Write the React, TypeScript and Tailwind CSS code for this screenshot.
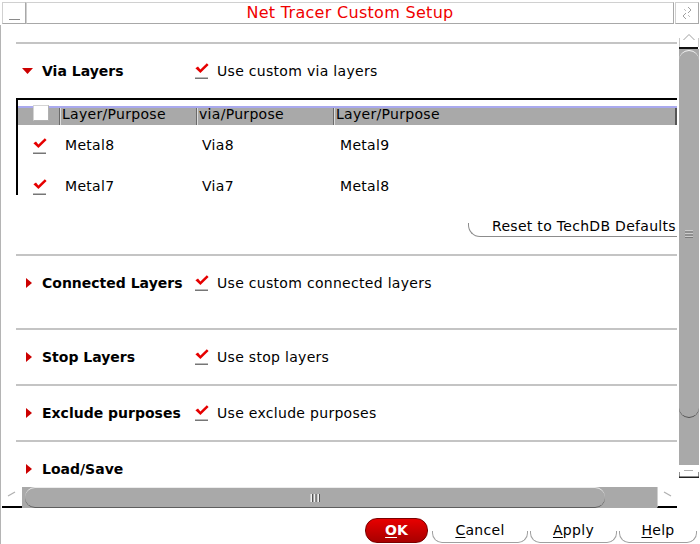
import React from "react";

function Check() {
  return (
    <svg width="14" height="16" viewBox="0 0 14 16" className="shrink-0">
      <path d="M0.4 5.2 L3 3.6 L5.4 6.4 L11.8 0.2 L13.6 2 L5.4 10 Z" fill="#e60000" />
      <rect x="0" y="14.6" width="13" height="1.2" fill="#555" />
    </svg>
  );
}

function Tri({ open }: { open: boolean }) {
  return open ? (
    <svg width="11" height="6" viewBox="0 0 11 6">
      <path d="M0 0 H11 L5.5 6 Z" fill="#cc0000" />
    </svg>
  ) : (
    <svg width="6" height="10" viewBox="0 0 6 10">
      <path d="M0 0 L6 5 L0 10 Z" fill="#cc0000" />
    </svg>
  );
}

function SectionHead({ label, option, open }: { label: string; option?: string; open?: boolean }) {
  return (
    <div className="h-[54px] flex items-center">
      <div className={open ? "w-[26px] flex pl-[6px]" : "w-[26px] flex pl-[10px]"}>
        <Tri open={!!open} />
      </div>
      <span className="w-[153px] font-bold tracking-normal whitespace-nowrap">{label}</span>
      {option && (
        <>
          <Check />
          <span className="ml-[8px] whitespace-nowrap">{option}</span>
        </>
      )}
    </div>
  );
}

function Row({ a, b, c }: { a: string; b: string; c: string }) {
  return (
    <div className="h-[41px] flex items-center">
      <div className="w-[41px] pl-[15px] flex">
        <Check />
      </div>
      <div className="w-[137px] pl-[6px]">{a}</div>
      <div className="w-[137px] pl-[6px]">{b}</div>
      <div className="flex-1 pl-[7px]">{c}</div>
    </div>
  );
}

function FlatButton({ w, mnemonic, rest }: { w: string; mnemonic: string; rest: string }) {
  return (
    <button className={`${w} h-[25px] relative flex items-center justify-center`}>
      <span className="absolute left-0 right-0 bottom-0 h-[12px] border-x border-b border-[#a0a0a0] rounded-b-[10px]" />
      <span>
        <span className="underline underline-offset-2">{mnemonic}</span>
        {rest}
      </span>
    </button>
  );
}

export default function App() {
  return (
    <div className="w-[700px] h-[544px] bg-white overflow-hidden flex flex-col text-[14px] tracking-[0.3px] text-black font-['DejaVu_Sans','Liberation_Sans',sans-serif]">
      {/* title bar */}
      <div className="h-[25px] flex pt-[2px] pl-[2px] pr-px">
        <div className="w-[24px] h-[22px] border border-[#d0d0d0] border-r-[#a8a8a8] border-b-[#a8a8a8] flex items-end justify-center pb-[3px]">
          <span className="w-[11px] h-px bg-[#8a8a8a]" />
        </div>
        <div className="flex-1 h-[22px] border border-[#d0d0d0] border-r-[#a8a8a8] border-b-[#a8a8a8] flex items-center justify-center text-[16px] text-[#f00000]">
          Net Tracer Custom Setup
        </div>
        <div className="w-[24px] h-[22px] ml-px border border-[#d0d0d0] border-r-[#a8a8a8] border-b-[#a8a8a8] flex items-center justify-center">
          <svg width="14" height="16" viewBox="0 0 14 16">
            <path d="M8 2 L11 5 L8 8" stroke="#a0a0a0" strokeWidth="1" fill="none" />
            <path d="M6 8 L3 11 L6 14" stroke="#a0a0a0" strokeWidth="1" fill="none" />
            <path d="M4 4 L6 6" stroke="#c0c0c0" strokeWidth="1" />
            <path d="M8 10 L10 12" stroke="#c0c0c0" strokeWidth="1" />
          </svg>
        </div>
      </div>

      {/* body */}
      <div className="flex-1 flex flex-col border-l border-[#b4b4b4]">
        <div className="h-[483px] flex">
          <div className="w-[676px] flex flex-col">
            {/* scrolling content */}
            <div className="h-[462px] overflow-hidden pl-[15px] pt-[17px]">
              <div className="border-t-2 border-[#c4c4c4]">
                <SectionHead label="Via Layers" option="Use custom via layers" open />
                <div className="h-[97px] overflow-hidden border-t-2 border-l-2 border-black">
                  <div className="h-[6px]" />
                  <div className="h-[19px] flex bg-[#a9a9a9] border-t-2 border-[#a9a9ee] leading-[16px]">
                    <div className="w-[41px] pl-[15px] flex items-start">
                      <span className="-mt-[3px] w-[16px] h-[16px] bg-white border border-[#d4d4d4] border-r-[#b0b0b0] border-b-[#b0b0b0]" />
                    </div>
                    <div className="w-[137px] pl-[2px] border-l border-[#6a6a6a] shadow-[inset_1px_0_0_#dcdcdc]">
                      <span className="relative -top-[2px]">Layer/Purpose</span>
                    </div>
                    <div className="w-[137px] pl-[2px] border-l border-[#6a6a6a] shadow-[inset_1px_0_0_#dcdcdc]">
                      <span className="relative -top-[2px]">via/Purpose</span>
                    </div>
                    <div className="flex-1 pl-[2px] border-l border-[#6a6a6a] border-r-2 border-r-[#555] shadow-[inset_1px_0_0_#dcdcdc]">
                      <span className="relative -top-[2px]">Layer/Purpose</span>
                    </div>
                  </div>
                  <Row a="Metal8" b="Via8" c="Metal9" />
                  <Row a="Metal7" b="Via7" c="Metal8" />
                </div>
                <div className="flex justify-end mt-[20px] mb-[17px]">
                  <button className="w-[209px] h-[22px] relative flex items-center pl-[24px] whitespace-nowrap">
                    <span className="absolute left-0 right-0 bottom-0 h-[14px] border-l border-b border-[#8c8c8c] rounded-bl-[12px]" />
                    Reset to TechDB Defaults
                  </button>
                </div>
              </div>
              <div className="border-t-2 border-[#c4c4c4] pb-[18px]">
                <SectionHead label="Connected Layers" option="Use custom connected layers" />
              </div>
              <div className="border-t-2 border-[#c4c4c4]">
                <SectionHead label="Stop Layers" option="Use stop layers" />
              </div>
              <div className="border-t-2 border-[#c4c4c4]">
                <SectionHead label="Exclude purposes" option="Use exclude purposes" />
              </div>
              <div className="border-t-2 border-[#c4c4c4]">
                <SectionHead label="Load/Save" />
              </div>
            </div>

            {/* horizontal scrollbar */}
            <div className="h-[21px] flex pl-px">
              <div className="w-[20px] h-full border-b-2 border-black flex items-start justify-center pt-[4px]">
                <svg width="10" height="6" viewBox="0 0 10 6">
                  <path d="M1 5 L8 1" stroke="#b0b0b0" strokeWidth="1.2" />
                </svg>
              </div>
              <div className="flex-1 bg-[#a9a9a9] flex pl-[3px]">
                <div className="w-[580px] h-full rounded-[10px] border-t border-[#ececec] border-b border-b-[#5e5e5e] flex items-center justify-center">
                  <svg width="10" height="8" viewBox="0 0 10 8">
                    <rect x="0.5" y="0" width="1.5" height="8" fill="#f0f0f0" />
                    <rect x="2" y="0" width="1" height="8" fill="#555" />
                    <rect x="4" y="0" width="1.5" height="8" fill="#f0f0f0" />
                    <rect x="5.5" y="0" width="1" height="8" fill="#555" />
                    <rect x="7.5" y="0" width="1.5" height="8" fill="#f0f0f0" />
                    <rect x="9" y="0" width="1" height="8" fill="#555" />
                  </svg>
                </div>
              </div>
              <div className="w-[20px] h-full border-b-2 border-black border-l border-l-[#d0d0d0] flex items-start justify-center pt-[4px]">
                <svg width="10" height="6" viewBox="0 0 10 6">
                  <path d="M1 1 L8 5" stroke="#b0b0b0" strokeWidth="1.2" />
                </svg>
              </div>
            </div>
          </div>

          {/* vertical scrollbar */}
          <div className="w-[20px] ml-[2px] flex flex-col pt-[8px]">
            <div className="h-[16px] flex flex-col">
              <svg width="20" height="16" viewBox="0 0 20 16">
                <path d="M4.5 7 L10 1.5 L15.5 7" stroke="#a0a0a0" strokeWidth="1" fill="none" />
                <path d="M0.5 5 V14" stroke="#c8c8c8" strokeWidth="1" />
                <path d="M19.5 5 V14" stroke="#c8c8c8" strokeWidth="1" />
                <rect x="0" y="14" width="19" height="2" fill="#111" />
              </svg>
            </div>
            <div className="h-[416px] bg-[#a9a9a9] flex flex-col pt-px">
              <div className="h-[368px] rounded-[10px] border-t-[1.5px] border-[#f4f4f4] border-b-[1.5px] border-b-[#505050] flex items-center justify-center">
                <svg width="8" height="8" viewBox="0 0 8 8">
                  <rect x="0" y="0.5" width="8" height="1" fill="#f0f0f0" />
                  <rect x="0" y="1.5" width="8" height="0.8" fill="#555" />
                  <rect x="0" y="3.5" width="8" height="1" fill="#f0f0f0" />
                  <rect x="0" y="4.5" width="8" height="0.8" fill="#555" />
                  <rect x="0" y="6.5" width="8" height="1" fill="#f0f0f0" />
                  <rect x="0" y="7.3" width="8" height="0.7" fill="#555" />
                </svg>
              </div>
            </div>
            <div className="h-[13px]">
              <svg width="20" height="13" viewBox="0 0 20 13">
                <path d="M5 5.5 H14" stroke="#b0b0b0" strokeWidth="1" />
                <path d="M0.5 7 V12" stroke="#909090" strokeWidth="1" />
                <path d="M19.5 7 V12" stroke="#909090" strokeWidth="1" />
                <rect x="0" y="11.5" width="20" height="1.5" fill="#222" />
              </svg>
            </div>
          </div>
        </div>

        {/* dialog buttons */}
        <div className="flex-1 flex items-start justify-end pt-[10px] pr-[3px]">
          <button className="w-[63px] h-[25px] mr-[4px] rounded-[12px] bg-gradient-to-b from-[#e80000] to-[#a80000] border border-[#7a0000] text-white font-bold tracking-normal flex items-center justify-center">
            <span>
              <span className="underline underline-offset-2">O</span>K
            </span>
          </button>
          <FlatButton w="w-[96px] mr-[2px]" mnemonic="C" rest="ancel" />
          <FlatButton w="w-[87px] mr-[2px]" mnemonic="A" rest="pply" />
          <FlatButton w="w-[78px]" mnemonic="H" rest="elp" />
        </div>
      </div>
    </div>
  );
}
